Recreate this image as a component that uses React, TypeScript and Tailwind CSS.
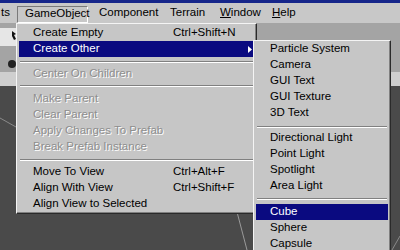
import React from 'react';

type Item =
  | { kind: 'sep'; h: number; off: number }
  | { kind: 'item'; label: string; shortcut?: string; disabled?: boolean; active?: boolean; arrow?: boolean };

const mainItems: Item[] = [
  { kind: 'item', label: 'Create Empty', shortcut: 'Ctrl+Shift+N' },
  { kind: 'item', label: 'Create Other', active: true, arrow: true },
  { kind: 'sep', h: 9, off: 4 },
  { kind: 'item', label: 'Center On Children', disabled: true },
  { kind: 'sep', h: 9, off: 3 },
  { kind: 'item', label: 'Make Parent', disabled: true },
  { kind: 'item', label: 'Clear Parent', disabled: true },
  { kind: 'item', label: 'Apply Changes To Prefab', disabled: true },
  { kind: 'item', label: 'Break Prefab Instance', disabled: true },
  { kind: 'sep', h: 9, off: 4 },
  { kind: 'item', label: 'Move To View', shortcut: 'Ctrl+Alt+F' },
  { kind: 'item', label: 'Align With View', shortcut: 'Ctrl+Shift+F' },
  { kind: 'item', label: 'Align View to Selected' },
];

const subItems: Item[] = [
  { kind: 'item', label: 'Particle System' },
  { kind: 'item', label: 'Camera' },
  { kind: 'item', label: 'GUI Text' },
  { kind: 'item', label: 'GUI Texture' },
  { kind: 'item', label: '3D Text' },
  { kind: 'sep', h: 9, off: 5 },
  { kind: 'item', label: 'Directional Light' },
  { kind: 'item', label: 'Point Light' },
  { kind: 'item', label: 'Spotlight' },
  { kind: 'item', label: 'Area Light' },
  { kind: 'sep', h: 10, off: 4 },
  { kind: 'item', label: 'Cube', active: true },
  { kind: 'item', label: 'Sphere' },
  { kind: 'item', label: 'Capsule' },
];

function Sep({ h, off }: { h: number; off: number }) {
  return (
    <div style={{ height: h, paddingTop: off }}>
      <div className="mx-[1px] h-[2px] border-t border-b border-t-[#808080] border-b-white" />
    </div>
  );
}

function Row({ item, labelW }: { item: Extract<Item, { kind: 'item' }>; labelW: number }) {
  const base = item.active ? 'bg-[#0a0a80] text-white' : item.disabled ? 'text-[#8e8e8e] [text-shadow:1px_1px_0_#ffffff]' : 'text-black';
  return (
    <div className={`flex h-[16px] items-center pl-[14px] whitespace-nowrap ${base}`}>
      <span style={{ width: labelW }} className="shrink-0">{item.label}</span>
      {item.shortcut && <span>{item.shortcut}</span>}
      {item.arrow && (
        <svg className="ml-auto mr-[2px]" width="4" height="7" viewBox="0 0 4 7">
          <path d="M0 0 L4 3.5 L0 7 Z" fill="#ffffff" />
        </svg>
      )}
    </div>
  );
}

function Menu({ items, labelW, className }: { items: Item[]; labelW: number; className: string }) {
  return (
    <div
      className={`absolute flex flex-col bg-[#c6c6c6] border border-t-[#f4f4f4] border-l-[#f4f4f4] border-r-[#2a2a2a] border-b-[#2a2a2a] shadow-[inset_-1px_-1px_0_#808080] px-[2px] ${className}`}
    >
      {items.map((it, i) =>
        it.kind === 'sep' ? <Sep key={i} h={it.h} off={it.off} /> : <Row key={i} item={it} labelW={labelW} />
      )}
    </div>
  );
}

export default function App() {
  return (
    <div
      className="relative w-[400px] h-[250px] overflow-hidden flex flex-col text-[11.5px] leading-none"
      style={{ fontFamily: '"Liberation Sans", Arial, sans-serif' }}
    >
      <div className="h-[3px] bg-[#16268a]" />
      <div className="h-[20px] bg-[#c8c8c8] flex items-center text-black whitespace-nowrap">
        <span className="w-[17px] pl-[1px]">ts</span>
        <span className="w-[71px] h-[17px] mt-[2px] flex items-center pl-[7px] border border-t-[#7a7a7a] border-l-[#7a7a7a] border-r-white border-b-white">
          GameObject
        </span>
        <span className="w-[82px] pl-[11px]">Component</span>
        <span className="w-[50px]">Terrain</span>
        <span className="w-[52px]"><span className="underline underline-offset-1">W</span>indow</span>
        <span><span className="underline underline-offset-1">H</span>elp</span>
      </div>
      <div className="h-[49px] bg-[#a4a4a4] relative">
        <div className="mt-[5px] w-[17px] h-[18px] bg-[#e6e6e6] flex items-center justify-end pr-[1px]">
          <svg width="4" height="12" viewBox="0 0 4 12">
            <path d="M0 0 L4 3 L2 4 L4 8 L2 9 L0 5 Z" fill="#111" />
          </svg>
        </div>
        <div className="mt-[14px] ml-[8px] w-[8px] h-[8px] rounded-full bg-[#222]" />
      </div>
      <div className="h-[14px] bg-[#cfcfcf]" />
      <div className="flex-1 bg-[#4a4a4a]">
        <svg width="400" height="164" viewBox="0 0 400 164">
          <line x1="0" y1="32" x2="16" y2="41" stroke="#8a8a8a" strokeWidth="1" />
          <line x1="237" y1="126" x2="247" y2="164" stroke="#9a9a9a" strokeWidth="1" />
          <line x1="392" y1="164" x2="400" y2="150" stroke="#8a8a8a" strokeWidth="1" />
        </svg>
      </div>

      <Menu items={mainItems} labelW={140} className="left-[16px] top-[23px] w-[241px] h-[191px] pt-[1px]" />
      <Menu items={subItems} labelW={100} className="left-[253px] top-[40px] w-[138px] h-[230px]" />
    </div>
  );
}
